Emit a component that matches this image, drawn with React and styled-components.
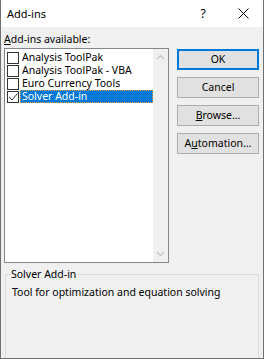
import styled, { createGlobalStyle } from "styled-components";

const GlobalStyle = createGlobalStyle`
  html, body {
    margin: 0;
    padding: 0;
    background: #ffffff;
  }
  body {
    font-family: "Noto Sans", "Open Sans", sans-serif;
    font-size: 10.5px;
    color: #000000;
  }
`;

const Window = styled.div`
  width: 264px;
  height: 359px;
  box-sizing: border-box;
  border: 1px solid #707070;
  border-top: none;
  display: flex;
  flex-direction: column;
  overflow: hidden;
  background: #f0f0f0;
`;

const TitleBar = styled.div`
  height: 27px;
  flex: none;
  background: #ffffff;
  display: flex;
  align-items: center;
  padding-left: 6px;
`;

const Title = styled.div`
  flex: 1;
  font-size: 11px;
  line-height: 15px;
  padding-bottom: 1px;
`;

const TitleButton = styled.div`
  width: 40px;
  height: 27px;
  display: flex;
  align-items: center;
  justify-content: center;
  font-size: 12px;
`;

const Body = styled.div`
  flex: 1;
  padding: 5px 4px 0 3px;
  display: flex;
  flex-direction: column;
`;

const TopRow = styled.div`
  display: flex;
  gap: 8px;
`;

const LeftCol = styled.div`
  display: flex;
  flex-direction: column;
`;

const Label = styled.div`
  line-height: 15px;
  margin-bottom: 1px;
`;

const Mn = styled.span`
  text-decoration: underline;
  text-underline-offset: 1px;
`;

const ListBox = styled.div`
  width: 165px;
  height: 215px;
  box-sizing: border-box;
  border: 1px solid #828790;
  background: #ffffff;
  display: flex;
`;

const Items = styled.div`
  flex: 1;
  padding-top: 2px;
`;

const Row = styled.div`
  height: 13px;
  display: flex;
  align-items: center;
  padding-left: 2px;
`;

const Check = styled.div`
  width: 12px;
  height: 12px;
  box-sizing: border-box;
  border: 1px solid #333333;
  background: #ffffff;
  margin-top: 1px;
  flex: none;
  display: flex;
  align-items: center;
  justify-content: center;
`;

const ItemText = styled.div`
  margin-left: 1px;
  flex: 1;
  height: 13px;
  line-height: 13px;
  padding-left: 2px;
  white-space: nowrap;
  background: ${(p) => (p.$selected ? "#0078d7" : "transparent")};
  color: ${(p) => (p.$selected ? "#ffffff" : "#000000")};
  outline: ${(p) => (p.$selected ? "1px dotted #f7a13a" : "none")};
  outline-offset: -1px;
`;

const ScrollBar = styled.div`
  width: 15px;
  background: #f0f0f0;
  display: flex;
  flex-direction: column;
  justify-content: space-between;
  align-items: center;
  padding: 5px 0;
`;

const ButtonCol = styled.div`
  display: flex;
  flex-direction: column;
  gap: 7px;
  padding-top: 17px;
`;

const Button = styled.div`
  width: 82px;
  height: 21px;
  box-sizing: border-box;
  background: #e1e1e1;
  border: 1px solid ${(p) => (p.$default ? "#0078d7" : "#adadad")};
  box-shadow: ${(p) => (p.$default ? "inset 0 0 0 1px #0078d7" : "none")};
  display: flex;
  align-items: center;
  justify-content: center;
  line-height: 15px;
`;

const GroupBox = styled.fieldset`
  margin: 4px 0 0 1px;
  padding: 3px 0 0 6px;
  border: 1px solid #dcdcdc;
  border-bottom: none;
  flex: 1;
  min-width: 0;
`;

const Legend = styled.legend`
  padding: 0;
  margin-left: -1px;
  line-height: 15px;
  padding-right: 1px;
`;

const Description = styled.div`
  line-height: 15px;
`;

const Chevron = ({ up }) => (
  <svg width="9" height="6" viewBox="0 0 9 6">
    <path
      d={up ? "M1 5 L4.5 1.5 L8 5" : "M1 1 L4.5 4.5 L8 1"}
      fill="none"
      stroke="#c0c0c0"
      strokeWidth="1.2"
    />
  </svg>
);

const items = [
  { name: "Analysis ToolPak", checked: false },
  { name: "Analysis ToolPak - VBA", checked: false },
  { name: "Euro Currency Tools", checked: false },
  { name: "Solver Add-in", checked: true, selected: true },
];

export default function App() {
  return (
    <>
      <GlobalStyle />
      <Window>
        <TitleBar>
          <Title>Add-ins</Title>
          <TitleButton>?</TitleButton>
          <TitleButton>
            <svg width="11" height="11" viewBox="0 0 11 11">
              <path d="M0.5 0.5 L10.5 10.5 M10.5 0.5 L0.5 10.5" stroke="#000" strokeWidth="1" />
            </svg>
          </TitleButton>
        </TitleBar>
        <Body>
          <TopRow>
            <LeftCol>
              <Label>
                <Mn>A</Mn>dd-ins available:
              </Label>
              <ListBox>
                <Items>
                  {items.map((it) => (
                    <Row key={it.name}>
                      <Check>
                        {it.checked && (
                          <svg width="10" height="10" viewBox="0 0 10 10">
                            <path d="M1 5 L4 8 L9.5 1.5" fill="none" stroke="#333" strokeWidth="1" />
                          </svg>
                        )}
                      </Check>
                      <ItemText $selected={it.selected}>{it.name}</ItemText>
                    </Row>
                  ))}
                </Items>
                <ScrollBar>
                  <Chevron up />
                  <Chevron />
                </ScrollBar>
              </ListBox>
            </LeftCol>
            <ButtonCol>
              <Button $default>OK</Button>
              <Button>Cancel</Button>
              <Button>
                <span>
                  <Mn>B</Mn>rowse...
                </span>
              </Button>
              <Button>
                <span>
                  A<Mn>u</Mn>tomation...
                </span>
              </Button>
            </ButtonCol>
          </TopRow>
          <GroupBox>
            <Legend>Solver Add-in</Legend>
            <Description>Tool for optimization and equation solving</Description>
          </GroupBox>
        </Body>
      </Window>
    </>
  );
}
